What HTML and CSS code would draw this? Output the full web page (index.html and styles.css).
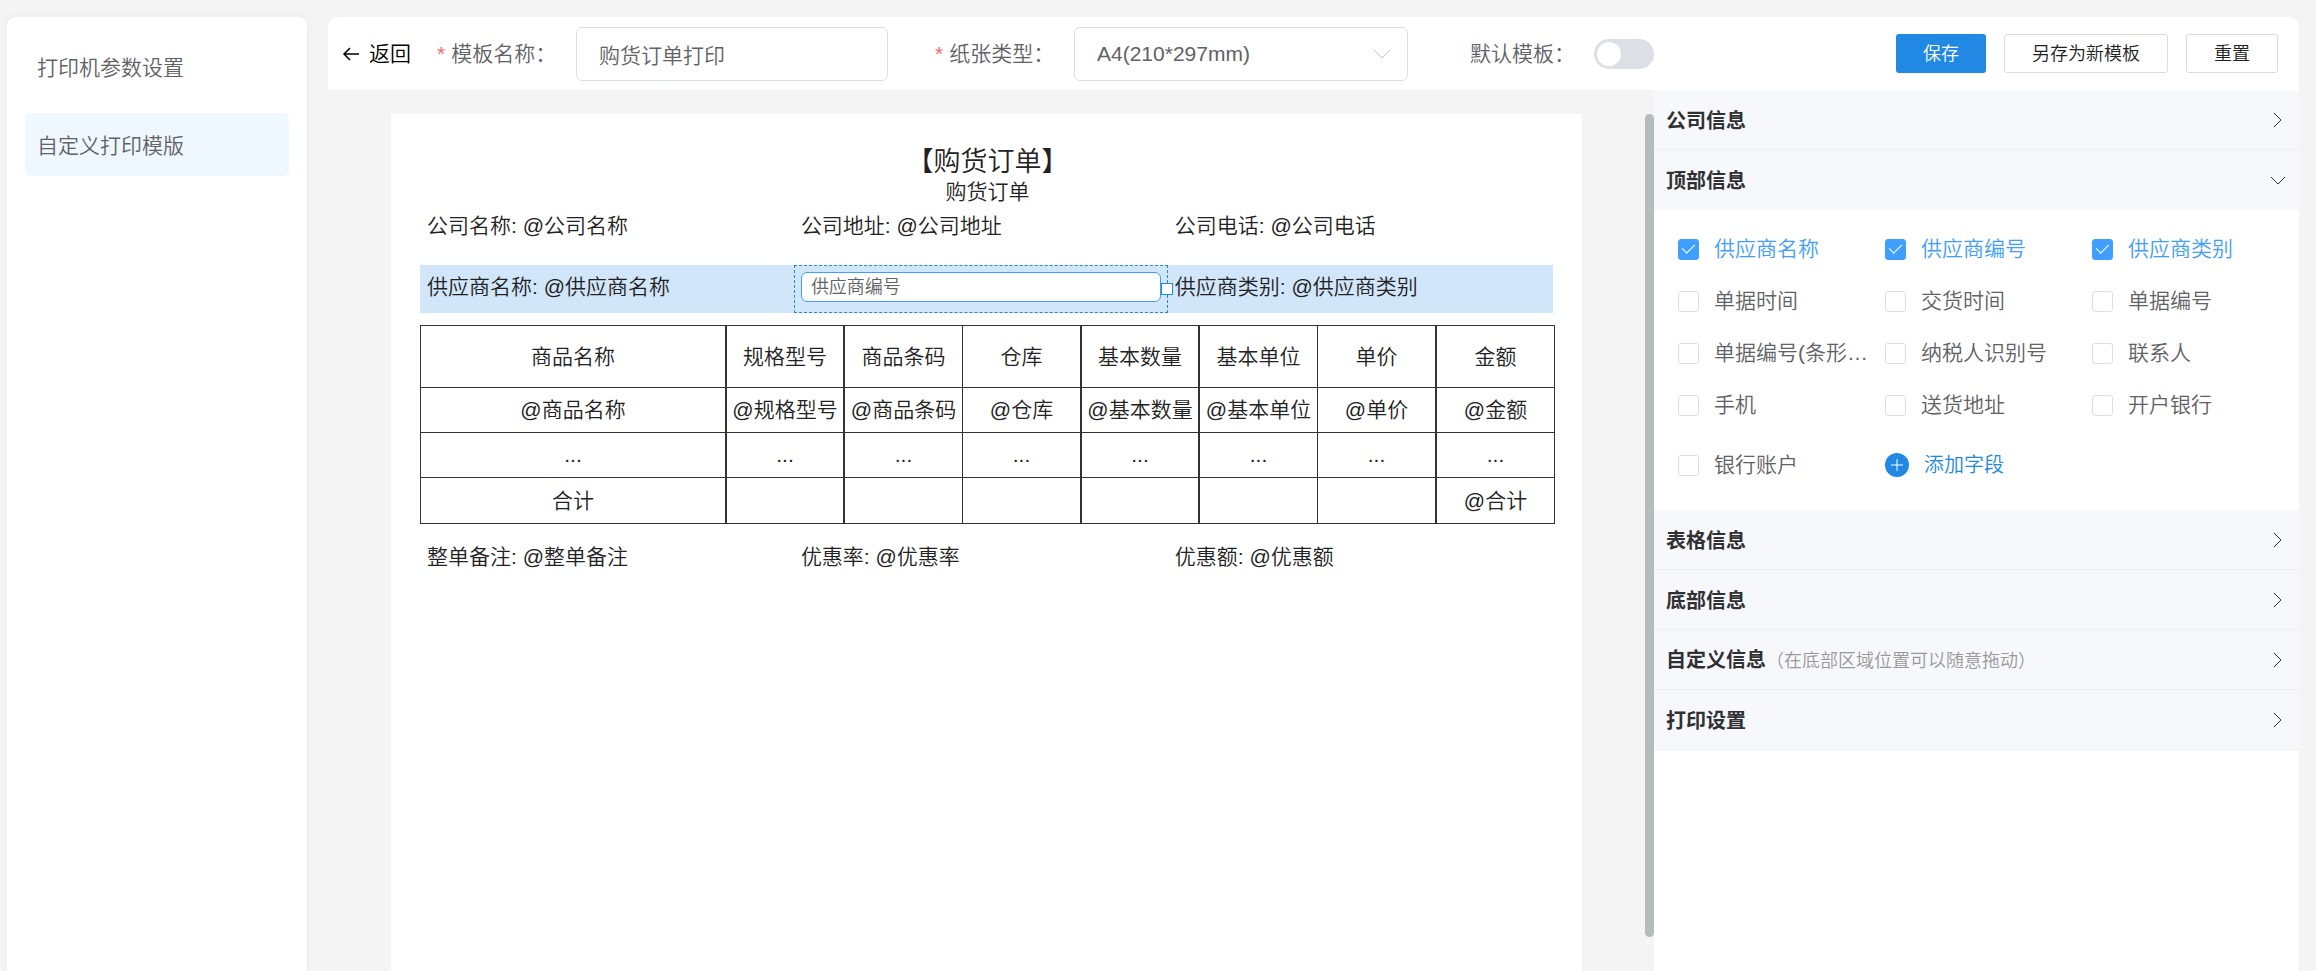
FILE: index.html
```html
<!DOCTYPE html>
<html lang="zh-CN">
<head>
<meta charset="utf-8">
<title>自定义打印模版</title>
<link rel="stylesheet" href="styles.css">
</head>
<body>
<div class="app">
  <nav class="sidebar">
    <a class="nav-item" href="#">打印机参数设置</a>
    <a class="nav-item active" href="#">自定义打印模版</a>
  </nav>

  <main class="main">
    <header class="toolbar">
      <button class="back" type="button">
        <svg class="back-icon" viewBox="0 0 18 18"><path d="M17 9H2M8 3L2 9l6 6"/></svg>
        <span>返回</span>
      </button>
      <div class="field name-field">
        <label class="required" for="tpl-name">模板名称：</label>
        <input class="text-input" id="tpl-name" type="text" value="购货订单打印">
      </div>
      <div class="field paper-field">
        <label class="required" for="tpl-paper">纸张类型：</label>
        <div class="select-wrap">
          <select class="text-input" id="tpl-paper"><option>A4(210*297mm)</option></select>
          <svg class="select-icon" viewBox="0 0 18 18"><path d="M1 5l8 8 8-8"/></svg>
        </div>
      </div>
      <div class="field default-field">
        <label for="tpl-default">默认模板：</label>
        <input class="switch" id="tpl-default" type="checkbox" role="switch">
      </div>
      <div class="actions">
        <button class="btn btn-primary" type="button">保存</button>
        <button class="btn" type="button">另存为新模板</button>
        <button class="btn" type="button">重置</button>
      </div>
    </header>

    <div class="workspace">
      <section class="canvas">
        <article class="paper">
          <h1 class="paper-title">【购货订单】</h1>
          <h2 class="paper-subtitle">购货订单</h2>
          <div class="paper-row">
            <div class="cell">公司名称: @公司名称</div>
            <div class="cell">公司地址: @公司地址</div>
            <div class="cell">公司电话: @公司电话</div>
          </div>
          <div class="paper-row highlighted">
            <div class="cell">供应商名称: @供应商名称</div>
            <div class="cell selected">
              <input class="cell-input" type="text" value="供应商编号" aria-label="字段名称">
              <span class="resize-handle"></span>
            </div>
            <div class="cell">供应商类别: @供应商类别</div>
          </div>
          <table class="goods">
            <colgroup><col class="col-name"><col><col><col class="col-wide"><col><col><col class="col-wide"><col></colgroup>
            <thead>
              <tr><th>商品名称</th><th>规格型号</th><th>商品条码</th><th>仓库</th><th>基本数量</th><th>基本单位</th><th>单价</th><th>金额</th></tr>
            </thead>
            <tbody>
              <tr><td>@商品名称</td><td>@规格型号</td><td>@商品条码</td><td>@仓库</td><td>@基本数量</td><td>@基本单位</td><td>@单价</td><td>@金额</td></tr>
              <tr><td>...</td><td>...</td><td>...</td><td>...</td><td>...</td><td>...</td><td>...</td><td>...</td></tr>
              <tr class="total"><td>合计</td><td></td><td></td><td></td><td></td><td></td><td></td><td>@合计</td></tr>
            </tbody>
          </table>
          <div class="paper-row">
            <div class="cell">整单备注: @整单备注</div>
            <div class="cell">优惠率: @优惠率</div>
            <div class="cell">优惠额: @优惠额</div>
          </div>
        </article>
        <div class="scroll-thumb"></div>
      </section>

      <aside class="panel">
        <button class="panel-head" type="button"><span>公司信息</span><svg class="chevron" viewBox="0 0 18 18"><path d="M5 1l7 7-7 7"/></svg></button>
        <button class="panel-head open" type="button" aria-expanded="true"><span>顶部信息</span><svg class="chevron" viewBox="0 0 18 18"><path d="M2 5l7 7 7-7"/></svg></button>
        <div class="options">
          <label class="option"><input type="checkbox" checked><span>供应商名称</span></label>
          <label class="option"><input type="checkbox" checked><span>供应商编号</span></label>
          <label class="option"><input type="checkbox" checked><span>供应商类别</span></label>
          <label class="option"><input type="checkbox"><span>单据时间</span></label>
          <label class="option"><input type="checkbox"><span>交货时间</span></label>
          <label class="option"><input type="checkbox"><span>单据编号</span></label>
          <label class="option"><input type="checkbox"><span>单据编号(条形码)</span></label>
          <label class="option"><input type="checkbox"><span>纳税人识别号</span></label>
          <label class="option"><input type="checkbox"><span>联系人</span></label>
          <label class="option"><input type="checkbox"><span>手机</span></label>
          <label class="option"><input type="checkbox"><span>送货地址</span></label>
          <label class="option"><input type="checkbox"><span>开户银行</span></label>
          <label class="option"><input type="checkbox"><span>银行账户</span></label>
          <button class="add-field" type="button">
            <svg class="add-icon" viewBox="0 0 24 24"><circle cx="12" cy="12" r="12"/><path d="M12 6v12M6 12h12"/></svg>
            <span>添加字段</span>
          </button>
        </div>
        <button class="panel-head" type="button"><span>表格信息</span><svg class="chevron" viewBox="0 0 18 18"><path d="M5 1l7 7-7 7"/></svg></button>
        <button class="panel-head" type="button"><span>底部信息</span><svg class="chevron" viewBox="0 0 18 18"><path d="M5 1l7 7-7 7"/></svg></button>
        <button class="panel-head" type="button"><span>自定义信息<small class="hint">（在底部区域位置可以随意拖动）</small></span><svg class="chevron" viewBox="0 0 18 18"><path d="M5 1l7 7-7 7"/></svg></button>
        <button class="panel-head" type="button"><span>打印设置</span><svg class="chevron" viewBox="0 0 18 18"><path d="M5 1l7 7-7 7"/></svg></button>
      </aside>
    </div>
  </main>
</div>
</body>
</html>
```

FILE: styles.css
```css
* {
  box-sizing: border-box;
}

body {
  margin: 0;
  background: #f4f4f4;
  color: #222;
  font-family: "Liberation Sans", "Noto Sans CJK SC", sans-serif;
  font-size: 21px;
  font-weight: 350;
  line-height: 30px;
}

button,
input,
select {
  margin: 0;
  font: inherit;
}

button {
  padding: 0;
  border: 0;
  background: none;
  cursor: pointer;
}

svg {
  flex: none;
  fill: none;
  stroke: currentColor;
}

.app {
  display: flex;
  gap: 21px;
  height: 100vh;
  padding: 17px 17px 0 7px;
  overflow: hidden;
}

/* Sidebar */
.sidebar {
  display: flex;
  flex: none;
  flex-direction: column;
  gap: 15px;
  width: 300px;
  padding: 18px;
  border-radius: 9px 9px 0 0;
  background: #fff;
  box-shadow: 0 0 9px rgba(0, 0, 0, 0.05);
}

.nav-item {
  padding: 18px 12px 15px;
  border-radius: 6px;
  color: #606266;
  text-decoration: none;
}

.nav-item.active {
  background: #eff7ff;
}

/* Toolbar */
.main {
  display: flex;
  flex: 1;
  flex-direction: column;
  min-width: 0;
}

.toolbar {
  display: flex;
  flex: none;
  align-items: center;
  height: 73px;
  padding: 0 21px 0 14px;
  border-radius: 9px 9px 0 0;
  background: #fff;
}

.back {
  display: flex;
  align-items: center;
  gap: 9px;
  color: #000;
}

.back-icon {
  width: 18px;
  height: 18px;
  stroke-width: 1.5;
}

.field {
  display: flex;
  align-items: center;
  color: #606266;
}

.field label {
  white-space: nowrap;
}

.required::before {
  content: "*";
  margin-right: 6px;
  color: #f56c6c;
}

.name-field {
  margin-left: 26px;
}

.paper-field {
  margin-left: 47px;
}

.default-field {
  margin-left: 62px;
}

.name-field label,
.paper-field label {
  width: 139px;
}

.default-field label {
  width: 124px;
}

.text-input {
  width: 312px;
  height: 54px;
  padding: 0 22px;
  border: 1px solid #dcdfe6;
  border-radius: 6px;
  outline: 0;
  background: #fff;
  color: #606266;
}

.select-wrap {
  position: relative;
}

.select-wrap .text-input {
  width: 334px;
  appearance: none;
}

.select-icon {
  position: absolute;
  top: 18px;
  right: 17px;
  width: 18px;
  height: 18px;
  color: #c0c4cc;
  pointer-events: none;
}

.switch {
  display: flex;
  align-items: center;
  width: 60px;
  height: 30px;
  padding: 3px;
  border-radius: 15px;
  appearance: none;
  background: #dcdfe6;
}

.switch::before {
  content: "";
  width: 24px;
  height: 24px;
  border-radius: 50%;
  background: #fff;
}

.actions {
  display: flex;
  gap: 18px;
  margin-left: auto;
}

.btn {
  height: 39px;
  padding: 0 27px;
  border: 1px solid #dcdcdc;
  border-radius: 3px;
  background: #fff;
  color: #222;
  font-size: 18px;
}

.btn-primary {
  border: 0;
  background: #2188e3;
  color: #fff;
}

/* Print canvas */
.workspace {
  display: flex;
  flex: 1;
  min-height: 0;
}

.canvas {
  display: flex;
  flex: 1;
  justify-content: space-between;
  padding: 24px 0 0 63px;
}

.paper {
  flex: none;
  width: 1191px;
  padding: 30px 27px 27px 29px;
  background: #fff;
}

.scroll-thumb {
  width: 9px;
  height: calc(100% - 34px);
  border-radius: 5px;
  background: #b4bcbe;
}

.paper-title,
.paper-subtitle {
  margin: 0;
  font-weight: 350;
  text-align: center;
}

.paper-title {
  font-size: 27px;
  line-height: 36px;
}

.paper-subtitle {
  font-size: 21px;
  line-height: 24px;
}

.paper-row {
  display: flex;
  height: 48px;
  margin-right: 2px;
}

.cell {
  width: 33%;
  padding: 7px;
}

.paper-row.highlighted {
  margin-top: 13px;
  background: #d2e6fa;
}

.cell.selected {
  position: relative;
  padding: 6px;
  border: 1px dashed #2188e3;
}

.cell-input {
  display: block;
  width: 100%;
  height: 30px;
  padding: 0 9px;
  border: 1px solid #409eff;
  border-radius: 6px;
  outline: 0;
  background: #fff;
  color: #606266;
  font-size: 18px;
}

.resize-handle {
  position: absolute;
  top: 17px;
  right: -6px;
  width: 12px;
  height: 12px;
  border: 1px solid #2188e3;
  background: #fff;
}

.goods {
  width: 100%;
  margin: 12px 0 11px;
  border: solid #333;
  border-width: 1px 0 0 1px;
  border-spacing: 0;
  table-layout: fixed;
}

.goods col {
  width: 118px;
}

.goods .col-name {
  width: 306px;
}

.goods .col-wide {
  width: 119px;
}

.goods th,
.goods td {
  height: 45px;
  padding: 0;
  border: solid #333;
  border-width: 0 2px 1px 0;
  font-weight: 350;
  text-align: center;
  white-space: nowrap;
}

.goods th {
  height: 62px;
}

.goods .total td {
  height: 46px;
}

.goods th:nth-child(3),
.goods td:nth-child(3),
.goods th:nth-child(6),
.goods td:nth-child(6),
.goods th:last-child,
.goods td:last-child {
  border-right-width: 1px;
}

/* Settings panel */
.panel {
  flex: none;
  width: 645px;
  background: #fff;
}

.panel-head {
  display: flex;
  align-items: center;
  justify-content: space-between;
  width: 100%;
  height: 60px;
  padding: 2px 12px 0;
  border-bottom: 1px solid #ebeef5;
  background: #f7f8fc;
  color: #303133;
  font-size: 20px;
  font-weight: 700;
  text-align: left;
}

.panel-head.open {
  border-bottom-color: transparent;
}

.hint {
  color: #999;
  font-size: 18px;
  font-weight: 350;
}

.chevron {
  width: 18px;
  height: 18px;
}

.options {
  display: grid;
  grid-template-columns: repeat(3, 207px);
  grid-template-rows: repeat(4, 52px) 68px;
  padding: 13px 0 11px 24px;
}

.option {
  display: flex;
  align-items: center;
  gap: 15px;
  padding-right: 15px;
  color: #606266;
}

.option span {
  overflow: hidden;
  text-overflow: ellipsis;
  white-space: nowrap;
}

.option input {
  display: grid;
  flex: none;
  place-items: center;
  width: 21px;
  height: 21px;
  border: 1px solid #dcdfe6;
  border-radius: 3px;
  appearance: none;
  background: #fff;
}

.option input:checked {
  border-color: #409eff;
  background: #409eff;
}

.option input:checked::before {
  content: "";
  width: 6px;
  height: 11px;
  margin-bottom: 4px;
  border: solid #fff;
  border-width: 0 1px 1px 0;
  transform: rotate(45deg);
}

.option input:checked + span {
  color: #409eff;
}

.add-field {
  display: flex;
  align-items: center;
  gap: 15px;
  color: #2188e3;
  font-size: 20px;
}

.add-icon {
  width: 24px;
  height: 24px;
}

.add-icon circle {
  fill: #2188e3;
  stroke: none;
}

.add-icon path {
  stroke: #fff;
}
```
